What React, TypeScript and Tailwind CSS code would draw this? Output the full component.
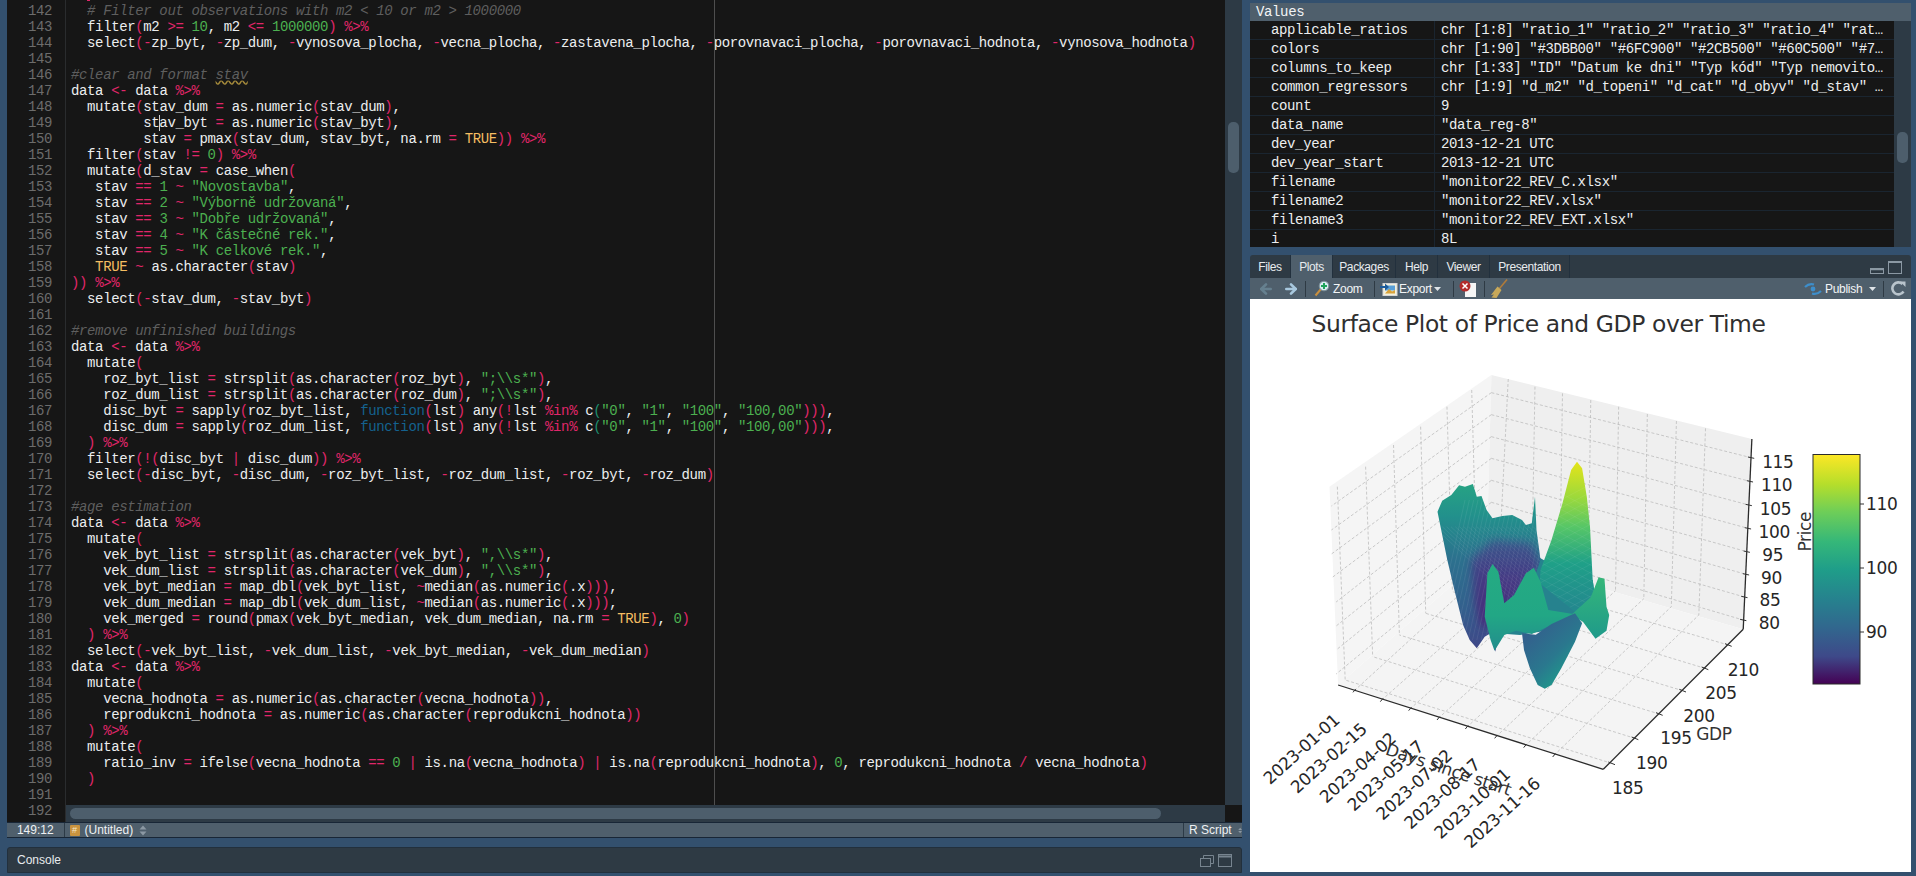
import { ArrowLeft, ArrowRight } from "lucide-react";

const code = [
  "  # Filter out observations with m2 < 10 or m2 > 1000000",
  "  filter(m2 >= 10, m2 <= 1000000) %>%",
  "  select(-zp_byt, -zp_dum, -vynosova_plocha, -vecna_plocha, -zastavena_plocha, -porovnavaci_plocha, -porovnavaci_hodnota, -vynosova_hodnota)",
  "",
  "#clear and format stav",
  "data <- data %>%",
  "  mutate(stav_dum = as.numeric(stav_dum),",
  "         stav_byt = as.numeric(stav_byt),",
  "         stav = pmax(stav_dum, stav_byt, na.rm = TRUE)) %>%",
  "  filter(stav != 0) %>%",
  "  mutate(d_stav = case_when(",
  '   stav == 1 ~ "Novostavba",',
  '   stav == 2 ~ "Výborně udržovaná",',
  '   stav == 3 ~ "Dobře udržovaná",',
  '   stav == 4 ~ "K částečné rek.",',
  '   stav == 5 ~ "K celkové rek.",',
  "   TRUE ~ as.character(stav)",
  ")) %>%",
  "  select(-stav_dum, -stav_byt)",
  "",
  "#remove unfinished buildings",
  "data <- data %>%",
  "  mutate(",
  '    roz_byt_list = strsplit(as.character(roz_byt), ";\\\\s*"),',
  '    roz_dum_list = strsplit(as.character(roz_dum), ";\\\\s*"),',
  '    disc_byt = sapply(roz_byt_list, function(lst) any(!lst %in% c("0", "1", "100", "100,00"))),',
  '    disc_dum = sapply(roz_dum_list, function(lst) any(!lst %in% c("0", "1", "100", "100,00"))),',
  "  ) %>%",
  "  filter(!(disc_byt | disc_dum)) %>%",
  "  select(-disc_byt, -disc_dum, -roz_byt_list, -roz_dum_list, -roz_byt, -roz_dum)",
  "",
  "#age estimation",
  "data <- data %>%",
  "  mutate(",
  '    vek_byt_list = strsplit(as.character(vek_byt), ",\\\\s*"),',
  '    vek_dum_list = strsplit(as.character(vek_dum), ",\\\\s*"),',
  "    vek_byt_median = map_dbl(vek_byt_list, ~median(as.numeric(.x))),",
  "    vek_dum_median = map_dbl(vek_dum_list, ~median(as.numeric(.x))),",
  "    vek_merged = round(pmax(vek_byt_median, vek_dum_median, na.rm = TRUE), 0)",
  "  ) %>%",
  "  select(-vek_byt_list, -vek_dum_list, -vek_byt_median, -vek_dum_median)",
  "data <- data %>%",
  "  mutate(",
  "    vecna_hodnota = as.numeric(as.character(vecna_hodnota)),",
  "    reprodukcni_hodnota = as.numeric(as.character(reprodukcni_hodnota))",
  "  ) %>%",
  "  mutate(",
  "    ratio_inv = ifelse(vecna_hodnota == 0 | is.na(vecna_hodnota) | is.na(reprodukcni_hodnota), 0, reprodukcni_hodnota / vecna_hodnota)",
  "  )",
  "",
  "",
];

const tokenRe =
  /(#.*$)|("(?:[^"\\]|\\.)*")|(\bTRUE\b)|(\bfunction\b)|(%[^%\s]*%)|((?<![\w.])\d+(?!\w))|(<-|>=|<=|==|!=|[=~!|/\-<>])|(\bc\()|([()])/g;

function CodeLine({ text }: { text: string }) {
  const parts: React.ReactNode[] = [];
  let last = 0;
  let m: RegExpExecArray | null;
  tokenRe.lastIndex = 0;
  while ((m = tokenRe.exec(text))) {
    parts.push(text.slice(last, m.index));
    const k = m.index;
    if (m[1]) {
      const i = m[1].indexOf("stav");
      parts.push(
        <span key={k} className="italic text-[#5f5f5f]">
          {i < 0 ? (
            m[1]
          ) : (
            <>
              {m[1].slice(0, i)}
              <span className="underline decoration-wavy decoration-[#a58a3a]">stav</span>
            </>
          )}
        </span>,
      );
    } else if (m[2] || m[6]) {
      parts.push(<span key={k} className="text-[#4cb050]">{m[0]}</span>);
    } else if (m[3]) {
      parts.push(<span key={k} className="text-[#f5bd62]">{m[0]}</span>);
    } else if (m[4]) {
      parts.push(<span key={k} className="text-[#14628f]">{m[0]}</span>);
    } else if (m[8]) {
      parts.push(
        <span key={k}>
          c<span className="text-[#1d8f6f]">(</span>
        </span>,
      );
    } else {
      parts.push(<span key={k} className="text-[#e0266a]">{m[0]}</span>);
    }
    last = k + m[0].length;
  }
  parts.push(text.slice(last));
  return <div className="h-[16px] whitespace-pre">{parts}</div>;
}

const values = [
  ["applicable_ratios", 'chr [1:8] "ratio_1" "ratio_2" "ratio_3" "ratio_4" "rat…'],
  ["colors", 'chr [1:90] "#3DBB00" "#6FC900" "#2CB500" "#60C500" "#7…'],
  ["columns_to_keep", 'chr [1:33] "ID" "Datum ke dni" "Typ kód" "Typ nemovito…'],
  ["common_regressors", 'chr [1:9] "d_m2" "d_topeni" "d_cat" "d_obyv" "d_stav" …'],
  ["count", "9"],
  ["data_name", '"data_reg-8"'],
  ["dev_year", "2013-12-21 UTC"],
  ["dev_year_start", "2013-12-21 UTC"],
  ["filename", '"monitor22_REV_C.xlsx"'],
  ["filename2", '"monitor22_REV.xlsx"'],
  ["filename3", '"monitor22_REV_EXT.xlsx"'],
  ["i", "8L"],
];

const tabs = [
  ["Files", "w-[41px]"],
  ["Plots", "w-[42px]"],
  ["Packages", "w-[63px]"],
  ["Help", "w-[42px]"],
  ["Viewer", "w-[52px]"],
  ["Presentation", "w-[80px]"],
];

// plot coordinates are read off the screenshot: z6/z7 convert crop positions to page pixels
const z6 = (x: number, y: number): [number, number] => [1300 + x / 2.545, 340 + y / 3];
const z7 = (x: number, y: number): [number, number] => [1250 + x / 3, 640 + y / 3];
const poly = (pts: number[][]) =>
  pts.map((p) => z6(p[0], p[1]).map((n) => n.toFixed(1)).join(",")).join(" ");

function Seg({ a, b }: { a: [number, number]; b: [number, number] }) {
  return <line x1={a[0]} y1={a[1]} x2={b[0]} y2={b[1]} />;
}

const T = [487, 105];
const TL = [75, 440];
const TR = [1150, 297];
const A = [97, 1035];
const D = [475, 645];
const B = [(1603.3 - 1300) * 2.545, (769.3 - 340) * 3];
const C = [1128, 868];

const backV = [
  [[530, 117], [507, 655]],
  [[598, 140], [590, 682]],
  [[668, 160], [661, 705]],
  [[740, 180], [733, 728]],
  [[811, 200], [803, 752]],
  [[884, 222], [875, 776]],
  [[958, 243], [945, 800]],
  [[1032, 265], [1015, 825]],
];
const leftV = [
  [[95, 440], [115, 1020]],
  [[167, 380], [185, 950]],
  [[238, 315], [253, 885]],
  [[307, 260], [320, 820]],
  [[374, 200], [388, 755]],
  [[437, 150], [450, 695]],
];
const zBack = [158, 224, 290, 355, 421, 487, 552, 618];
const zLeft = [498, 570, 642, 714, 786, 858, 930, 1002];
const zRight = [
  [1148, 353],
  [1145, 424],
  [1142, 495],
  [1140, 565],
  [1137, 635],
  [1135, 703],
  [1131, 771],
  [1128, 840],
];
const zLabels = [
  ["115", 1216, 365],
  ["110", 1213, 436],
  ["105", 1210, 507],
  ["100", 1207, 577],
  ["95", 1203, 645],
  ["90", 1200, 714],
  ["85", 1196, 781],
  ["80", 1194, 848],
];
const xTicks = [
  [313, 152],
  [395, 180],
  [480, 207],
  [565, 235],
  [650, 262],
  [738, 290],
  [825, 318],
  [912, 346],
];
const yTicks = [
  [1085, 370],
  [1155, 295],
  [1228, 222],
  [1298, 152],
  [1365, 85],
  [1435, 15],
];
const yLabels = [
  ["185", 1133, 445],
  ["190", 1205, 370],
  ["195", 1278, 295],
  ["200", 1347, 228],
  ["205", 1413, 158],
  ["210", 1480, 90],
];
const dates = [
  ["2023-01-01", 272, 245],
  ["2023-02-15", 354, 272],
  ["2023-04-02", 441, 301],
  ["2023-05-17", 524, 325],
  ["2023-07-02", 610, 352],
  ["2023-08-17", 694, 379],
  ["2023-10-01", 784, 408],
  ["2023-11-16", 874, 436],
];

const massPts = [
  [350, 515], [362, 482], [385, 465], [405, 436], [420, 440], [440, 432], [450, 470], [462, 468], [475, 510],
  [490, 535], [515, 528], [540, 525], [565, 540], [575, 555], [590, 550], [598, 470], [602, 570], [612, 660],
  [600, 700], [560, 770], [510, 860], [497, 935], [485, 880], [470, 890], [450, 925], [432, 900], [415, 855],
  [395, 760], [375, 660],
];
const peakPts = [
  [612, 690], [640, 600], [668, 490], [690, 390], [705, 365], [718, 385], [730, 470], [738, 560], [745, 720],
  [752, 775], [700, 815], [610, 730],
];

function SurfacePlot() {
  const [ax, ay] = z6(A[0], A[1]);
  const [bx, by] = z6(B[0], B[1]);
  const [cx, cy] = z6(C[0], C[1]);
  const [tx, ty] = z6(TR[0], TR[1]);
  return (
    <svg viewBox="1250 299 661 573" className="block h-[573px] w-[661px]">
      <defs>
        <linearGradient id="cbar" x1="0" y1="0" x2="0" y2="1">
          <stop offset="0" stopColor="#fde725" />
          <stop offset="0.13" stopColor="#b5de2b" />
          <stop offset="0.25" stopColor="#6ece58" />
          <stop offset="0.38" stopColor="#35b779" />
          <stop offset="0.5" stopColor="#1f9e89" />
          <stop offset="0.63" stopColor="#26828e" />
          <stop offset="0.75" stopColor="#31688e" />
          <stop offset="0.88" stopColor="#3e4989" />
          <stop offset="1" stopColor="#440154" />
        </linearGradient>
        <linearGradient id="mass" gradientUnits="userSpaceOnUse" x1="0" y1={z6(0, 430)[1]} x2="0" y2={z6(0, 930)[1]}>
          <stop offset="0" stopColor="#26a383" />
          <stop offset="0.2" stopColor="#22908c" />
          <stop offset="0.45" stopColor="#2c718e" />
          <stop offset="0.75" stopColor="#33608d" />
          <stop offset="1" stopColor="#404688" />
        </linearGradient>
        <linearGradient id="purple" gradientUnits="userSpaceOnUse" x1="0" y1={z6(0, 560)[1]} x2="0" y2={z6(0, 830)[1]}>
          <stop offset="0" stopColor="#33628d" />
          <stop offset="0.5" stopColor="#433e85" />
          <stop offset="1" stopColor="#472a7a" />
        </linearGradient>
        <linearGradient id="peak" gradientUnits="userSpaceOnUse" x1="0" y1={z6(0, 365)[1]} x2="0" y2={z6(0, 800)[1]}>
          <stop offset="0" stopColor="#e5e419" />
          <stop offset="0.25" stopColor="#9bd93c" />
          <stop offset="0.45" stopColor="#56c667" />
          <stop offset="0.7" stopColor="#1fa088" />
          <stop offset="1" stopColor="#23898e" />
        </linearGradient>
        <linearGradient id="ridge" gradientUnits="userSpaceOnUse" x1="0" y1={z6(0, 670)[1]} x2="0" y2={z6(0, 930)[1]}>
          <stop offset="0" stopColor="#25ab82" />
          <stop offset="0.6" stopColor="#22a785" />
          <stop offset="1" stopColor="#228d8d" />
        </linearGradient>
        <linearGradient id="lobe" gradientUnits="userSpaceOnUse" x1="0" y1={z6(0, 710)[1]} x2="0" y2={z6(0, 895)[1]}>
          <stop offset="0" stopColor="#35b779" />
          <stop offset="1" stopColor="#1f9a8a" />
        </linearGradient>
        <linearGradient id="trough" gradientUnits="userSpaceOnUse" x1={z6(565, 0)[0]} y1={z6(0, 900)[1]} x2={z6(700, 0)[0]} y2={z6(0, 1060)[1]}>
          <stop offset="0" stopColor="#33608d" />
          <stop offset="0.45" stopColor="#2a788e" />
          <stop offset="0.75" stopColor="#1f988b" />
          <stop offset="1" stopColor="#3b4f8a" />
        </linearGradient>
        <clipPath id="massClip">
          <polygon points={poly(massPts)} />
        </clipPath>
        <clipPath id="peakClip">
          <polygon points={poly(peakPts)} />
        </clipPath>
        <filter id="soft">
          <feGaussianBlur stdDeviation="5" />
        </filter>
      </defs>

      <text x="1538.5" y="332" textAnchor="middle" fill="#2f2f2f" className="font-['DejaVu_Sans'] text-[23.4px]">
        Surface Plot of Price and GDP over Time
      </text>

      <polygon points={poly([TL, T, D, A])} fill="#f5f5f5" />
      <polygon points={poly([T, TR, C, D])} fill="#efefef" />
      <polygon points={poly([A, B, C, D])} fill="#f4f4f4" />

      <g stroke="#bdbdbd" strokeWidth="0.8" strokeDasharray="3 2" fill="none">
        {backV.map((l, i) => (
          <Seg key={i} a={z6(l[0][0], l[0][1])} b={z6(l[1][0], l[1][1])} />
        ))}
        {leftV.map((l, i) => (
          <Seg key={i} a={z6(l[0][0], l[0][1])} b={z6(l[1][0], l[1][1])} />
        ))}
        {zBack.map((y, i) => (
          <g key={i}>
            <Seg a={z6(487, y)} b={z6(zRight[i][0], zRight[i][1])} />
            <Seg a={z6(487, y)} b={z6(i < 4 ? 80 : 92, zLeft[i])} />
          </g>
        ))}
        {xTicks.map((p, i) => (
          <Seg key={i} a={z7(p[0], p[1])} b={z6(backV[i][1][0], backV[i][1][1])} />
        ))}
        {yTicks.map((p, i) => (
          <Seg key={i} a={z7(p[0], p[1])} b={z6(leftV[i][1][0], leftV[i][1][1])} />
        ))}
      </g>

      <polygon
        points={poly([[590, 640], [620, 660], [745, 720], [752, 790], [700, 830], [640, 870], [560, 885], [500, 880], [500, 800]])}
        fill="#26828e"
      />
      <polygon points={poly(massPts)} fill="url(#mass)" />
      <polygon
        points={poly([[435, 660], [490, 600], [590, 610], [612, 680], [560, 760], [505, 840], [462, 870], [445, 790]])}
        fill="url(#purple)"
        filter="url(#soft)"
        clipPath="url(#massClip)"
      />
      <g clipPath="url(#massClip)" stroke="#ffffff" strokeOpacity="0.13" strokeWidth="0.6">
        {Array.from({ length: 26 }, (_, i) => (
          <g key={i}>
            <Seg a={z6(340 + i * 11, 900)} b={z6(420 + i * 11, 480)} />
            <Seg a={z6(340 + i * 11, 560)} b={z6(560 + i * 11, 800)} />
          </g>
        ))}
      </g>
      <polygon points={poly(peakPts)} fill="url(#peak)" />
      <g clipPath="url(#peakClip)" stroke="#ffffff" strokeOpacity="0.09" strokeWidth="0.7">
        {Array.from({ length: 20 }, (_, i) => (
          <g key={i}>
            <Seg a={z6(600, 420 + i * 24)} b={z6(760, 520 + i * 24)} />
            <Seg a={z6(600, 520 + i * 24)} b={z6(760, 420 + i * 24)} />
          </g>
        ))}
      </g>
      <polygon
        points={poly([[690, 825], [740, 772], [760, 712], [775, 716], [780, 800], [787, 825], [780, 872], [752, 896], [720, 845]])}
        fill="url(#lobe)"
      />
      <polygon
        points={poly([[470, 830], [477, 700], [490, 672], [505, 695], [520, 790], [545, 765], [575, 700], [595, 683], [612, 725], [632, 810], [695, 822], [640, 855], [590, 882], [550, 872], [520, 885], [495, 932], [485, 900]])}
        fill="url(#ridge)"
      />
      <polygon
        points={poly([[565, 880], [600, 884], [640, 852], [700, 820], [718, 850], [700, 905], [665, 985], [640, 1035], [623, 1046], [605, 1035], [585, 985], [570, 930]])}
        fill="url(#trough)"
      />

      <g stroke="#2b2b2b" strokeWidth="1.3">
        <line x1={ax} y1={ay} x2={bx} y2={by} />
        <line x1={bx} y1={by} x2={cx} y2={cy} />
        <line x1={cx} y1={cy} x2={tx} y2={ty} />
      </g>
      <g stroke="#333333" strokeWidth="1">
        {zRight.map((p, i) => (
          <Seg key={i} a={z6(p[0] - 8, p[1] - 2)} b={z6(p[0] + 8, p[1] + 2)} />
        ))}
        {xTicks.map((p, i) => (
          <Seg key={i} a={z7(p[0] - 4, p[1] + 5)} b={z7(p[0] + 4, p[1] - 5)} />
        ))}
        {yTicks.map((p, i) => (
          <Seg key={i} a={z7(p[0] - 10, p[1] - 4)} b={z7(p[0] + 10, p[1] + 4)} />
        ))}
      </g>

      <g fill="#262626" className="font-['DejaVu_Sans'] text-[17px]">
        {zLabels.map(([t, x, y]) => {
          const [px, py] = z6(x as number, y as number);
          return (
            <text key={t} x={px} y={py + 6} textAnchor="middle">
              {t}
            </text>
          );
        })}
        {yLabels.map(([t, x, y]) => {
          const [px, py] = z7(x as number, y as number);
          return (
            <text key={t} x={px} y={py + 6} textAnchor="middle">
              {t}
            </text>
          );
        })}
        {dates.map(([t, x, y]) => {
          const [px, py] = z7(x as number, y as number);
          return (
            <text key={t} x={px} y={py} textAnchor="end" transform={`rotate(-42 ${px} ${py})`}>
              {t}
            </text>
          );
        })}
        <text x={z7(1392, 282)[0]} y={z7(1392, 282)[1] + 6} textAnchor="middle" fill="#333333">
          GDP
        </text>
        <text
          x={z7(590, 405)[0]}
          y={z7(590, 405)[1]}
          textAnchor="middle"
          fill="#333333"
          transform={`rotate(18.5 ${z7(590, 405)[0]} ${z7(590, 405)[1]})`}
        >
          Days since start
        </text>
        <text x={z6(1284, 575)[0] + 6} y={z6(1284, 575)[1]} textAnchor="middle" fill="#333333" transform={`rotate(-90 ${z6(1284, 575)[0] + 6} ${z6(1284, 575)[1]})`}>
          Price
        </text>
        {[["110", 504], ["100", 568], ["90", 632]].map(([t, y]) => (
          <g key={t}>
            <line x1="1860" y1={y} x2="1864" y2={y} stroke="#333333" />
            <text x="1866" y={(y as number) + 6}>
              {t}
            </text>
          </g>
        ))}
      </g>
      <rect x="1813" y="454.5" width="47" height="229.5" fill="url(#cbar)" stroke="#2b2b2b" strokeWidth="1" />
    </svg>
  );
}

function Sep() {
  return <div className="h-[16px] w-px bg-[#2e3a44]" />;
}

function Updown() {
  return (
    <svg width="8" height="11" viewBox="0 0 8 11" fill="#8b98a3">
      <path d="M4 0.5 7.5 4.5H.5Z" />
      <path d="M4 10.5 .5 6.5H7.5Z" />
    </svg>
  );
}

function PlotToolbar() {
  return (
    <div className="flex h-[21px] items-center bg-[#4f5f6c] text-[12px] tracking-[-0.3px] text-[#f2f4f6]">
      <ArrowLeft className="ml-[8px] h-[16px] w-[16px] text-[#66808f]" strokeWidth={4} />
      <ArrowRight className="ml-[9px] h-[16px] w-[16px] text-[#a8c8de]" strokeWidth={4} />
      <div className="ml-[6px]">
        <Sep />
      </div>
      <svg className="ml-[8px]" width="16" height="17" viewBox="0 0 16 17">
        <path d="M1.5 15.5 7 9" stroke="#c98f3e" strokeWidth="2" />
        <circle cx="10" cy="6" r="4.8" fill="#d8edf0" stroke="#7b8f99" />
        <path d="M10 3v6M7 6h6" stroke="#1fa45b" strokeWidth="2" />
      </svg>
      <span className="ml-[3px] w-[31px]">Zoom</span>
      <div className="ml-[10px]">
        <Sep />
      </div>
      <svg className="ml-[5px]" width="18" height="16" viewBox="0 0 18 16">
        <rect x="3" y="2.5" width="14" height="12" fill="#f3f0dc" stroke="#d5d5d5" />
        <rect x="5" y="4.5" width="10" height="5" fill="#5aa0d8" />
        <path d="M5 12.5 9 8l3 2.5 3-1.500v3.500Z" fill="#d8a23a" />
        <path d="M0 5h5V2.500L9 6 5 9.500V7H0Z" fill="#1c5b9a" />
      </svg>
      <span className="ml-[1px] w-[31px]">Export</span>
      <svg className="ml-[4px]" width="7" height="4" viewBox="0 0 7 4" fill="#dfe4e8">
        <path d="M0 0h7L3.500 4Z" />
      </svg>
      <div className="ml-[12px]">
        <Sep />
      </div>
      <svg className="ml-[5px]" width="18" height="17" viewBox="0 0 18 17">
        <path d="M6 3h11v14H6Z" fill="#f5f5f5" />
        <circle cx="6" cy="6" r="5.500" fill="#b22a2a" />
        <path d="M3.500 3.500l5 5M8.500 3.500l-5 5" stroke="#fff" strokeWidth="1.500" />
      </svg>
      <div className="ml-[7px]">
        <Sep />
      </div>
      <svg className="ml-[5px]" width="18" height="20" viewBox="0 0 18 20">
        <path d="M17 .5 9.500 9.500" stroke="#b07b3a" strokeWidth="1.600" />
        <path d="M7.500 7.500l4 3.500-5 8-5-.5 2.500-3-3 .5Z" fill="#c8a95a" />
      </svg>
      <div className="flex-1" />
      <svg width="18" height="16" viewBox="0 0 18 16" fill="none">
        <path d="M1 6C4 3 7 2.500 10 3.500" stroke="#3d8ecb" strokeWidth="2.200" />
        <path d="M17 10c-3 3-6 3.500-9 2.500" stroke="#3d8ecb" strokeWidth="2.200" />
        <circle cx="9" cy="8" r="2.400" fill="#3d8ecb" />
      </svg>
      <span className="ml-[3px] w-[35px]">Publish</span>
      <svg className="ml-[9px]" width="7" height="4" viewBox="0 0 7 4" fill="#dfe4e8">
        <path d="M0 0h7L3.500 4Z" />
      </svg>
      <div className="ml-[7px]">
        <Sep />
      </div>
      <svg className="ml-[7px] mr-[5px]" width="15" height="15" viewBox="0 0 15 15" fill="none">
        <path d="M12.500 10.500A6 6 0 1 1 11.500 3" stroke="#b9c4cc" strokeWidth="2.600" />
        <path d="M9 .5h5.500V6Z" fill="#b9c4cc" />
      </svg>
    </div>
  );
}

function WinIcons() {
  return (
    <svg width="32" height="13" viewBox="0 0 32 13" fill="none" stroke="#77848f">
      <rect x="0.500" y="4.500" width="10" height="8" />
      <path d="M3.500 4.500V1.500H13.500V9.500H10.500" />
      <rect x="18.500" y="0.500" width="13" height="12" />
      <path d="M18.500 2.500H31.500" strokeWidth="2" />
    </svg>
  );
}

export default function App() {
  return (
    <div className="flex h-[876px] w-[1916px] gap-[8px] overflow-hidden bg-[#33506e] pl-[7px] font-['Liberation_Mono'] text-[14px] leading-[16px] tracking-[-0.37px] text-[#eceeef]">
      <div className="flex w-[1235px] flex-col">
        <div className="flex h-[822px] bg-[#161616]">
          <div className="w-[59px] shrink-0 overflow-hidden border-r border-[#2a2c2e] pr-[13px] pt-[3px] text-right text-[#6c6c6c]">
            {Array.from({ length: 51 }, (_, i) => (
              <div key={i} className="h-[16px]">
                {142 + i}
              </div>
            ))}
          </div>
          <div className="flex min-w-0 flex-1 flex-col">
            <div className="flex h-[805px]">
              <div className="relative min-w-0 flex-1 overflow-hidden pl-[5px] pt-[3px]">
                {code.map((line, i) => (
                  <CodeLine key={i} text={line} />
                ))}
                <div className="absolute inset-y-0 left-[648px] w-px bg-[#4e4e4e]" />
                <div className="absolute left-[93px] top-[115px] h-[16px] w-px bg-[#d0d0d0]" />
                <div className="absolute left-[21px] top-0 h-px w-[3px] bg-[#e0266a]" />
              </div>
              <div className="w-[17px] shrink-0 bg-[#2d3a45] px-[3px] pt-[122px]">
                <div className="h-[51px] rounded-[5px] bg-[#4d5e6c]" />
              </div>
            </div>
            <div className="flex h-[17px]">
              <div className="flex-1 bg-[#2d3a45] py-[3px] pl-[4px] pr-[64px]">
                <div className="h-[11px] rounded-[6px] bg-[#4d5e6c]" />
              </div>
              <div className="w-[17px] bg-[#161616]" />
            </div>
          </div>
        </div>
        <div className="flex h-[16px] items-center border-y border-[#182636] bg-[#4f5f6c] font-['Liberation_Sans'] text-[12px] tracking-normal text-[#eef1f3]">
          <div className="flex h-full w-[57.500px] items-center justify-center border-r border-[#2c3a46]">149:12</div>
          <div className="ml-[5px] flex h-[11px] w-[10px] items-center justify-center rounded-[1px] bg-[#c9933f] text-[9px] leading-none text-[#f6e8c8]">
            #
          </div>
          <span className="ml-[5px]">(Untitled)</span>
          <div className="ml-[6px]">
            <Updown />
          </div>
          <div className="flex-1" />
          <div className="flex h-full w-[59px] items-center gap-[6px] border-l border-[#2c3a46] pl-[5px]">
            <span className="whitespace-nowrap">R Script</span>
            <Updown />
          </div>
        </div>
        <div className="mt-[9px] flex h-[26px] items-center justify-between rounded-t-[3px] border border-[#22303d] bg-[#2e3a44] px-[9px] font-['Liberation_Sans'] text-[12px] tracking-normal text-[#e8ebee]">
          <span>Console</span>
          <WinIcons />
        </div>
      </div>

      <div className="flex w-[661px] flex-col pt-[3px]">
        <div className="flex h-[244px] flex-col bg-[#161616]">
          <div className="flex h-[18px] shrink-0 items-center bg-[#4f5f6c] pl-[6px] text-[#f2f4f6]">Values</div>
          <div className="flex min-h-0 flex-1">
            <div className="min-w-0 flex-1 overflow-hidden">
              {values.map(([name, value]) => (
                <div key={name} className="flex h-[19px] items-center border-b border-[#1a2530] whitespace-pre">
                  <div className="flex h-full w-[185px] shrink-0 items-center border-r border-[#1a2530] pl-[21px]">{name}</div>
                  <div className="pl-[6px]">{value}</div>
                </div>
              ))}
            </div>
            <div className="w-[17px] shrink-0 bg-[#2d3a45] px-[3px] pt-[111px]">
              <div className="h-[31px] rounded-[5px] bg-[#4d5e6c]" />
            </div>
          </div>
        </div>
        <div className="mt-[8px] flex h-[23px] items-stretch rounded-t-[3px] bg-[#2e3a44] font-['Liberation_Sans'] text-[12px] tracking-[-0.4px] text-[#e8ebee]">
          {tabs.map(([name, w]) => (
            <div
              key={name}
              className={`flex items-center justify-center border-r border-[#22303d] ${w} ${name === "Plots" ? "bg-[#4f5f6c]" : ""}`}
            >
              {name}
            </div>
          ))}
          <div className="flex-1" />
          <svg className="mr-[9px] mt-[6px]" width="32" height="14" viewBox="0 0 32 14" fill="none" stroke="#8b98a3">
            <rect x="0.500" y="7.500" width="13" height="5" strokeWidth="1" />
            <path d="M1 8.500H13" strokeWidth="1.500" />
            <rect x="18.500" y="0.500" width="13" height="12" />
            <path d="M18.500 1.500H31.500" />
          </svg>
        </div>
        <div className="font-['Liberation_Sans']">
          <PlotToolbar />
        </div>
        <div className="bg-white">
          <SurfacePlot />
        </div>
      </div>
    </div>
  );
}
